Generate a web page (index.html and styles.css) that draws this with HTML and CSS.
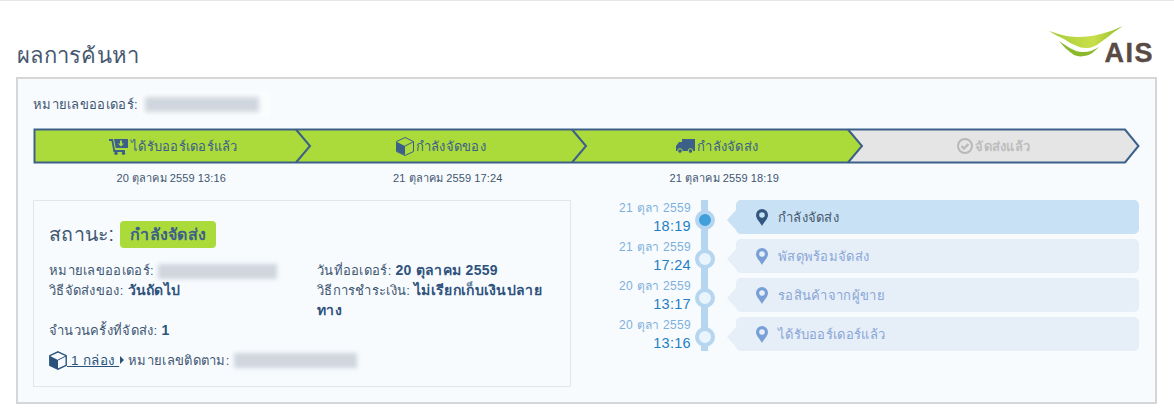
FILE: index.html
```html
<!DOCTYPE html>
<html lang="th">
<head>
<meta charset="utf-8">
<title>ผลการค้นหา</title>
<link rel="stylesheet" href="styles.css">
</head>
<body>
<header class="top">
  <h1 class="title">ผลการค้นหา</h1>
  <div class="logo">
    <svg class="logo-swoosh" width="78" height="38" viewBox="0 0 78 38">
      <defs><linearGradient id="sw" x1="0" x2="1" y1="0" y2="0"><stop offset="0" stop-color="#a6cc36"/><stop offset=".6" stop-color="#c9df4a"/><stop offset="1" stop-color="#8fbb2c"/></linearGradient></defs>
      <path d="M1 10C10 13 20 16 29 16C38 16 46 15 53 13C61 11 68 8 75 5C72 7 69 9 66 11C60 16 56 19 53 21C48 25 43 27 39 27C34 27 31 26 29 25C24 23 20 21 16 18C11 16 6 13 1 10Z" fill="url(#sw)"/>
      <path d="M11 20C16 23 21 27 26 29C30 31 33 31 36 31C41 31 46 29 51 26C46 31 41 35 36 35C32 36 29 35 26 34C20 30 15 25 11 20Z" fill="#8cb92c"/>
    </svg>
    <span class="logo-text">AIS</span>
  </div>
</header>
<main class="panel">
  <div class="order-line">หมายเลขออเดอร์:<span class="blur-wrap"><span class="blur-bar"></span></span></div>
  <div class="stepper">
    <svg class="track" width="1108" height="36" viewBox="0 0 1108 36">
      <path d="M1 1.500H815L829 18L815 34.500H1Z" fill="#abdb3a"/>
      <path d="M815 1.500H1092L1105.500 18L1092 34.500H815L829 18Z" fill="#e5e5e5"/>
      <path d="M1.500 1.500H1092L1105.500 18L1092 34.500H1.500Z" fill="none" stroke="#3d6089" stroke-width="2"/>
      <path d="M263 1.500L277 18L263 34.500M539 1.500L553 18L539 34.500M815 1.500L829 18L815 34.500" fill="none" stroke="#3d6089" stroke-width="2"/>
    </svg>
    <div class="step step-1">
      <svg class="ico" width="20" height="17" viewBox="0 0 20 17"><path d="M0 1H4L6 12H16V14H4.500L2.500 3H0Z M5 1H19V10H6.700Z" fill="#3d6089"/><circle cx="7" cy="15.300" r="1.700" fill="#3d6089"/><circle cx="14.500" cy="15.300" r="1.700" fill="#3d6089"/><path d="M11 2.500V5.500H9L12 8.500L15 5.500H13V2.500Z" fill="#abdb3a"/></svg>
      <span>ได้รับออร์เดอร์แล้ว</span>
    </div>
    <div class="step step-2">
      <svg class="ico" width="18" height="19" viewBox="0 0 18 19"><path d="M9 .500L17.500 4.500V14.500L9 18.500L.500 14.500V4.500Z" fill="#abdb3a" stroke="#3d6089" stroke-width="1"/><path d="M1 5L9 9V18L1 14.500Z" fill="#3d6089"/><path d="M9 9L17 5" stroke="#3d6089" fill="none"/></svg>
      <span>กำลังจัดของ</span>
    </div>
    <div class="step step-3">
      <svg class="ico" width="19" height="15" viewBox="0 0 19 15"><path d="M6 0H19V12H6Z M0 7L3 3H6V12H0Z" fill="#3d6089"/><circle cx="4" cy="12" r="2.300" fill="#3d6089" stroke="#abdb3a"/><circle cx="14.500" cy="12" r="2.300" fill="#3d6089" stroke="#abdb3a"/></svg>
      <span>กำลังจัดส่ง</span>
    </div>
    <div class="step step-4">
      <svg class="ico" width="16" height="16" viewBox="0 0 16 16"><circle cx="8" cy="8" r="7" fill="none" stroke="#b8b8b8" stroke-width="2"/><path d="M4.500 8L7 10.500L11.500 6" fill="none" stroke="#b8b8b8" stroke-width="2.200"/></svg>
      <span>จัดส่งแล้ว</span>
    </div>
  </div>
  <div class="dates">
    <span>20 ตุลาคม 2559 13:16</span>
    <span>21 ตุลาคม 2559 17:24</span>
    <span>21 ตุลาคม 2559 18:19</span>
    <span></span>
  </div>
  <div class="columns">
    <section class="card">
      <div class="status"><span class="status-label">สถานะ:</span><span class="badge">กำลังจัดส่ง</span></div>
      <div class="info">
        <div class="info-cell">หมายเลขออเดอร์: <span class="blur-bar small"></span></div>
        <div class="info-cell">วันที่ออเดอร์: <b>20 ตุลาคม 2559</b></div>
        <div class="info-cell">วิธีจัดส่งของ: <b>วันถัดไป</b></div>
        <div class="info-cell">วิธีการชำระเงิน: <b>ไม่เรียกเก็บเงินปลายทาง</b></div>
        <div class="info-cell">จำนวนครั้งที่จัดส่ง: <b>1</b></div>
      </div>
      <div class="tracking">
        <svg class="box" width="18" height="19" viewBox="0 0 18 19"><path d="M9 .800L17.200 4.600V14.400L9 18.200L.800 14.400V4.600Z" fill="#f7fbfe" stroke="#28527c" stroke-width="1.400"/><path d="M1 5L9 9V18L1 14.500Z" fill="#28527c"/><path d="M9 9L17 5" stroke="#28527c" fill="none"/></svg>
        <a class="parcel" href="#">&nbsp;1 กล่อง&nbsp;</a>
        <span class="caret"></span>
        <span>หมายเลขติดตาม: </span><span class="blur-bar track-no"></span>
      </div>
    </section>
    <section class="timeline">
      <div class="row">
        <div class="when"><span>21 ตุลา 2559</span><strong>18:19</strong></div>
        <div class="rail"><span class="dot active"></span></div>
        <div class="event current"><svg class="pin" width="12" height="17" viewBox="0 0 12 17"><path fill-rule="evenodd" d="M6 0A6 6 0 0 1 12 6C12 10 8 13 6 17C4 13 0 10 0 6A6 6 0 0 1 6 0ZM6 3.200A2.800 2.800 0 1 0 6 8.800A2.800 2.800 0 1 0 6 3.200Z"/></svg><span>กำลังจัดส่ง</span></div>
      </div>
      <div class="row">
        <div class="when"><span>21 ตุลา 2559</span><strong>17:24</strong></div>
        <div class="rail"><span class="dot"></span></div>
        <div class="event"><svg class="pin" width="12" height="17" viewBox="0 0 12 17"><path fill-rule="evenodd" d="M6 0A6 6 0 0 1 12 6C12 10 8 13 6 17C4 13 0 10 0 6A6 6 0 0 1 6 0ZM6 3.200A2.800 2.800 0 1 0 6 8.800A2.800 2.800 0 1 0 6 3.200Z"/></svg><span>พัสดุพร้อมจัดส่ง</span></div>
      </div>
      <div class="row">
        <div class="when"><span>20 ตุลา 2559</span><strong>13:17</strong></div>
        <div class="rail"><span class="dot"></span></div>
        <div class="event"><svg class="pin" width="12" height="17" viewBox="0 0 12 17"><path fill-rule="evenodd" d="M6 0A6 6 0 0 1 12 6C12 10 8 13 6 17C4 13 0 10 0 6A6 6 0 0 1 6 0ZM6 3.200A2.800 2.800 0 1 0 6 8.800A2.800 2.800 0 1 0 6 3.200Z"/></svg><span>รอสินค้าจากผู้ขาย</span></div>
      </div>
      <div class="row">
        <div class="when"><span>20 ตุลา 2559</span><strong>13:16</strong></div>
        <div class="rail"><span class="dot"></span></div>
        <div class="event"><svg class="pin" width="12" height="17" viewBox="0 0 12 17"><path fill-rule="evenodd" d="M6 0A6 6 0 0 1 12 6C12 10 8 13 6 17C4 13 0 10 0 6A6 6 0 0 1 6 0ZM6 3.200A2.800 2.800 0 1 0 6 8.800A2.800 2.800 0 1 0 6 3.200Z"/></svg><span>ได้รับออร์เดอร์แล้ว</span></div>
      </div>
    </section>
  </div>
</main>
</body>
</html>
```
FILE: styles.css
```css
* { box-sizing: border-box; }
html, body { margin: 0; padding: 0; }
body {
  background: #fff;
  border-top: 1px solid #e6e6e6;
  color: #3f5773;
  font-family: "Liberation Sans", "Noto Sans", sans-serif;
  font-size: 13px;
  letter-spacing: .3px;
  height: 411px;
  overflow: hidden;
}
.top {
  display: flex;
  justify-content: space-between;
  align-items: flex-end;
  height: 76px;
  padding: 0 20px 6px 17px;
}
.title { margin: 0; font-size: 22px; font-weight: 400; line-height: 30px; color: #46586f; letter-spacing: .3px; }
.logo { position: relative; width: 106px; height: 50px; }
.logo-swoosh { position: absolute; left: 0; top: 0; }
.logo-text {
  position: absolute; right: 0; bottom: 8px;
  font: 700 27px/20px "Liberation Sans", sans-serif;
  letter-spacing: 1.5px;
  color: #5a4a44;
  -webkit-text-stroke: .4px #5a4a44;
}
.panel {
  margin: 0 17px 0 16px;
  height: 327px;
  border: 2px solid #d6d6d6;
  background: #f7fbfe;
  padding: 13px 15px 0;
}
.order-line { display: flex; align-items: center; height: 25px; white-space: pre; }
.blur-wrap { display: block; width: 130px; height: 25px; margin-left: 2px; background: #fbfcfd; padding: 5px; }
.blur-bar { display: inline-block; height: 15px; background: #cfd6de; filter: blur(2.500px); width: 114px; }
.blur-bar.small { vertical-align: middle; width: 119px; filter: blur(2px); }
.blur-bar.track-no { width: 123px; filter: blur(2px); }
.stepper { position: relative; display: flex; height: 36px; margin-top: 11px; }
.track { position: absolute; left: 0; top: 0; }
.step {
  position: relative;
  display: flex;
  align-items: center;
  justify-content: center;
  gap: 2px;
  width: 276.5px;
  font-size: 13px;
  letter-spacing: .25px;
  color: #3d6089;
}
.step-2, .step-3 { left: -7px; }
.step-1 { left: 2px; }
.step-4 { left: -7px; color: #bdbdbd; font-weight: 700; }
.dates { display: flex; margin-top: 6px; font-size: 11px; letter-spacing: .1px; line-height: 16px; color: #42566e; }
.dates span { width: 276.5px; text-align: center; }
.columns { display: flex; margin-top: 14px; }
.card {
  width: 538px;
  height: 187px;
  border: 1px solid #e2e6e9;
  padding: 19px 15px 0;
  flex: none;
}
.status { display: flex; align-items: center; gap: 6px; height: 28px; }
.status-label { font-size: 19.5px; }
.badge {
  background: #abdb3a;
  border-radius: 4px;
  height: 27px;
  line-height: 27px;
  padding: 0 10px;
  font-size: 16px;
  font-weight: 700;
  color: #3d6089;
}
.info {
  display: grid;
  grid-template-columns: 268px 238px;
  line-height: 20px;
  margin-top: 13px;
}
.info b { color: #2f527c; font-size: 14px; line-height: 16px; }
.tracking { display: flex; align-items: center; margin-top: 10px; height: 18px; white-space: pre; }
.parcel { color: #28527c; font-size: 13.5px; }
.caret {
  width: 0; height: 0; margin: 0 4px 0 1px;
  border-left: 4px solid #28527c;
  border-top: 4px solid transparent;
  border-bottom: 4px solid transparent;
}
.timeline { flex: 1; display: flex; flex-direction: column; }
.row { display: flex; height: 39px; }
.when {
  width: 120px;
  display: flex;
  flex-direction: column;
  align-items: flex-end;
  font-size: 12px;
  line-height: 16px;
  color: #7fb0dc;
}
.when strong { font-weight: 400; font-size: 14.5px; line-height: 20px; color: #1f7fc4; }
.rail {
  position: relative;
  width: 7px;
  margin-left: 10px;
  background: #b6d5ef;
}
.row:last-child .rail { height: 34px; }
.dot {
  position: absolute;
  left: -6.5px; top: 10px;
  width: 20px; height: 20px;
  border-radius: 50%;
  border: 4px solid #b6d5ef;
  background: #e9f4fc;
}
.dot.active { background: #3fa0dc; }
.event {
  position: relative;
  display: flex;
  align-items: center;
  gap: 10px;
  margin-left: 28px;
  padding-left: 20px;
  width: 403px;
  height: 34px;
  border-radius: 5px;
  background: #e6eff7;
  color: #8aa6d8;
}
.event::before {
  content: "";
  position: absolute;
  left: -9px; top: 10px;
  border-right: 9px solid #e6eff7;
  border-top: 10px solid transparent;
  border-bottom: 10px solid transparent;
}
.event.current { background: #c9e1f5; color: #46586f; }
.event.current::before { border-right-color: #c9e1f5; }
.pin { fill: #79a0d6; flex: none; }
.current .pin { fill: #33587f; }
```
